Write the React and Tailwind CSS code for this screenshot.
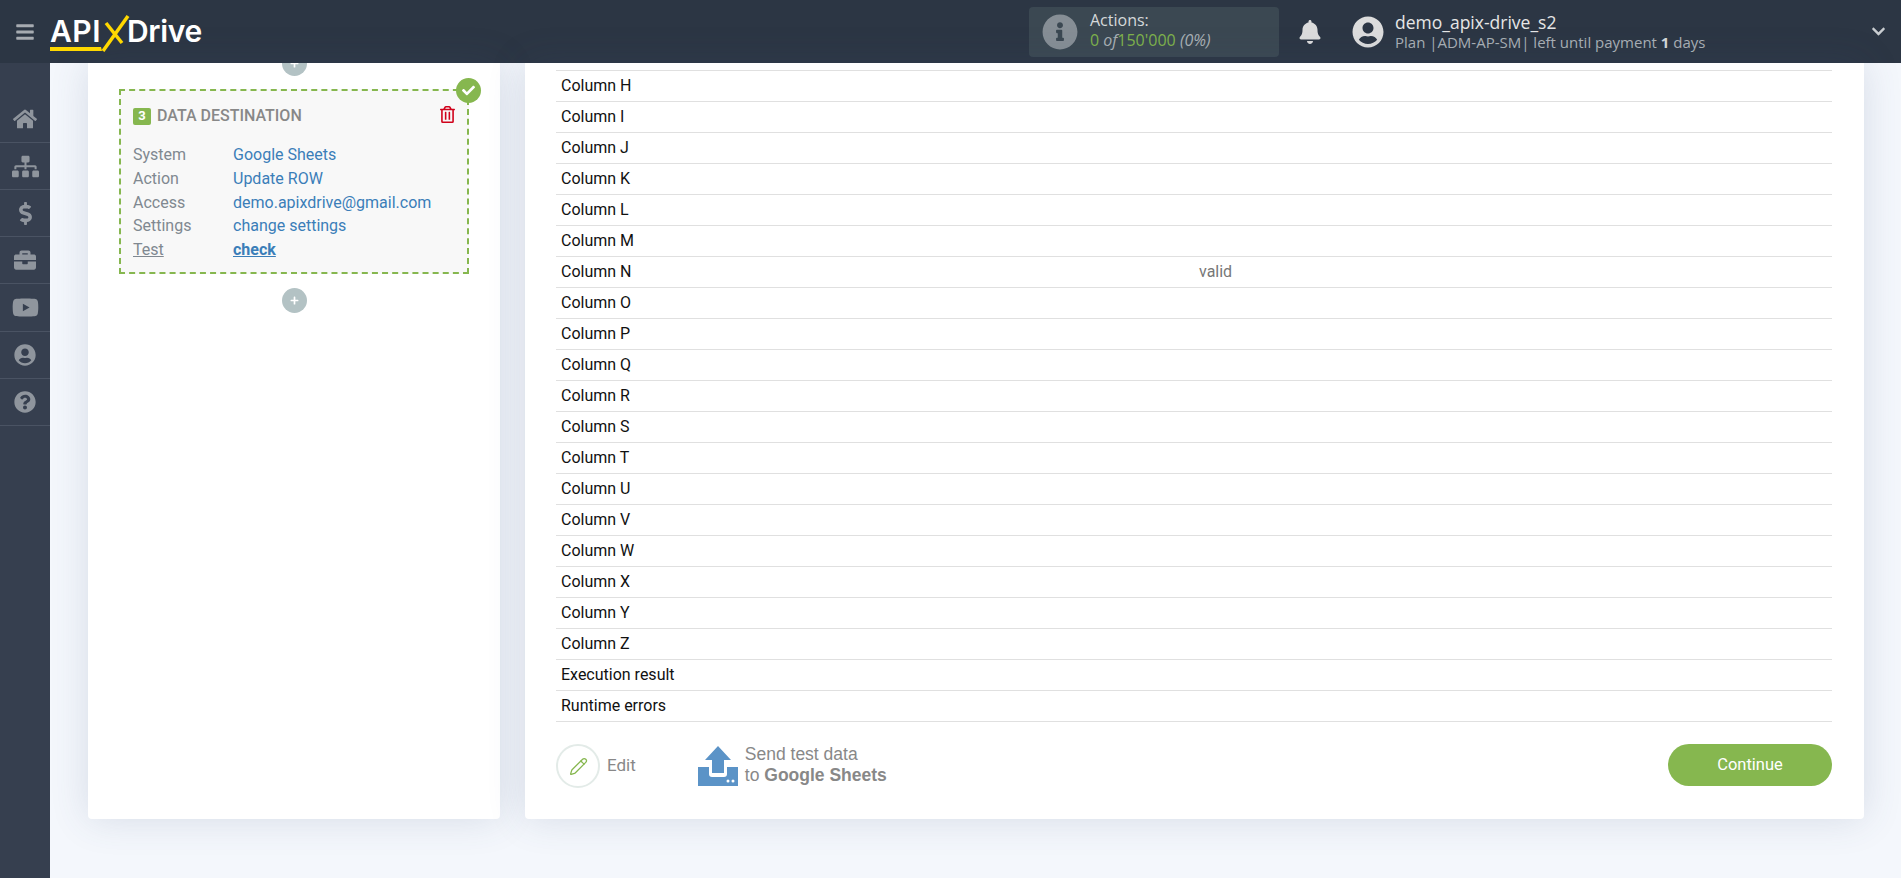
import React from "react";
import {
  FaBars, FaHome, FaSitemap, FaDollarSign, FaBriefcase, FaYoutube, FaUserCircle,
  FaQuestionCircle, FaInfoCircle, FaBell, FaChevronDown, FaCheck, FaRegTrashAlt, FaPlus,
} from "react-icons/fa";
import { Pencil } from "lucide-react";

const roboto = "font-['Roboto',sans-serif]";

const navIcons = [
  [FaHome, "text-[24px]", "h-[47px]"],
  [FaSitemap, "text-[27px]", "h-[47px]"],
  [FaDollarSign, "text-[23px]", "h-[47px]"],
  [FaBriefcase, "text-[22px]", "h-[47px]"],
  [FaYoutube, "text-[27px]", "h-[48px]"],
  [FaUserCircle, "text-[22px]", "h-[47px]"],
  [FaQuestionCircle, "text-[22px]", "h-[47px]"],
];

const details = [
  ["System", "Google Sheets"],
  ["Action", "Update ROW"],
  ["Access", "demo.apixdrive@gmail.com"],
  ["Settings", "change settings"],
];

const columns = "HIJKLMNOPQRSTUVWXYZ".split("").map((c) => "Column " + c);
const rows = [...columns, "Execution result", "Runtime errors"];

const Plus = ({ className = "" }) => (
  <div className={"flex h-[25px] w-[25px] items-center justify-center rounded-full bg-[#b3c2c4] text-[9px] text-white " + className}>
    <FaPlus />
  </div>
);

const Logo = () => (
  <div className="relative ml-[15px] flex h-[36px] w-[152px] items-center font-['Inter',sans-serif] text-[30px] font-semibold text-white">
    <span className="tracking-[0.5px]">API</span>
    <svg className="absolute left-0 top-0" width="90" height="40" viewBox="0 0 90 40">
      <path d="M0 33 H51 L52 37 H0 Z" fill="#ffd800" />
      <path d="M53 37 L78 2" stroke="#ffd800" strokeWidth="3.5" fill="none" />
      <path d="M56 9 L72 29" stroke="#ffd800" strokeWidth="3.5" fill="none" />
    </svg>
    <span className="ml-[26px] tracking-[-0.3px]">Drive</span>
  </div>
);

const Header = () => (
  <header className="flex h-[63px] shrink-0 items-center bg-[#2c3644] font-['Open_Sans',sans-serif]">
    <FaBars className="ml-[15px] text-[20px] text-[#a6abb1]" />
    <Logo />
    <div className="ml-[827px] flex h-[50px] w-[250px] items-center rounded-[4px] bg-[#3b4852] pl-[13px]">
      <FaInfoCircle className="text-[36px] text-[#868e95]" />
      <div className="ml-[12px] mt-[-3px] leading-[20px]">
        <div className="text-[16px] text-[#d5d8da]">Actions:</div>
        <div className="text-[16px] text-[#7fb24b]">
          0 <i className="text-[#a9b0b5]">of</i>150'000 <i className="text-[#a9b0b5]">(0%)</i>
        </div>
      </div>
    </div>
    <FaBell className="ml-[19px] text-[24px] text-[#dcdcdc]" />
    <FaUserCircle className="ml-[30px] text-[32px] text-[#dcdcdc]" />
    <div className="ml-[11px] leading-[20px]">
      <div className="text-[17.5px] text-[#e6e6e6]">demo_apix-drive_s2</div>
      <div className="text-[15px] text-[#a9b0b5]">
        Plan |ADM-AP-SM| left until payment <b className="text-[#d5d8da]">1</b> days
      </div>
    </div>
    <FaChevronDown className="ml-auto mr-[15px] text-[15px] text-[#c9cdd1]" />
  </header>
);

const Sidebar = () => (
  <nav className="w-[50px] shrink-0 bg-[#363f4f] pt-[33px]">
    {navIcons.map(([Icon, size, height], i) => (
      <div key={i} className={"flex items-center justify-center border-b border-[#4a5363] text-[#8f959d] " + height}>
        <Icon className={size} />
      </div>
    ))}
  </nav>
);

const FlowCard = () => (
  <section className="flex h-[756px] w-[412px] shrink-0 flex-col items-center overflow-hidden rounded-b-[4px] bg-white shadow-[0_0_38px_rgba(60,80,120,0.16)]">
    <Plus className="mt-[-12px]" />
    <div className="relative mt-[13px] h-[185px] w-[350px] border-2 border-dashed border-[#86b74f] bg-[#f8f8f8] pl-[12px]">
      <div className="absolute right-[-14px] top-[-13px] flex h-[25px] w-[25px] items-center justify-center rounded-full bg-[#86b74f] text-[13px] text-white">
        <FaCheck />
      </div>
      <FaRegTrashAlt className="absolute right-[11px] top-[15px] text-[17px] text-[#d0021b]" />
      <div className="mt-[13px] flex items-center">
        <span className="flex h-[17px] w-[18px] items-center justify-center rounded-[2px] bg-[#86b74f] text-[13px] font-bold text-white">3</span>
        <span className="ml-[6px] text-[16px] font-medium text-[#888]">DATA DESTINATION</span>
      </div>
      <div className="mt-[15px] text-[16px] leading-[23.8px]">
        {details.map(([k, v]) => (
          <div key={k} className="flex">
            <span className="w-[100px] text-[#808890]">{k}</span>
            <span className="text-[#3b7eb8]">{v}</span>
          </div>
        ))}
        <div className="flex">
          <span className="w-[100px] text-[#808890] underline">Test</span>
          <span className="font-bold text-[#3b7eb8] underline">check</span>
        </div>
      </div>
    </div>
    <Plus className="mt-[14px]" />
  </section>
);

const ResultPanel = () => (
  <section className="flex h-[756px] flex-1 flex-col rounded-b-[4px] bg-white pl-[31px] pr-[32px] pt-[7px] shadow-[0_0_38px_rgba(60,80,120,0.16)]">
    <div className="border-t border-[#e0e0e0] text-[16px] text-[#111]">
      {rows.map((r) => (
        <div key={r} className="flex h-[31px] items-center border-b border-[#e0e0e0] pl-[5px] pb-[1px]">
          <span className="w-[638px]">{r}</span>
          {r === "Column N" && <span className="text-[#777]">valid</span>}
        </div>
      ))}
    </div>
    <div className="mt-[22px] flex items-center">
      <div className="flex h-[44px] w-[44px] items-center justify-center rounded-full border-2 border-[#e3ebe8] text-[#86b74f]">
        <Pencil size={19} strokeWidth={1.6} />
      </div>
      <span className="ml-[7px] text-[17px] text-[#888]">Edit</span>
      <svg className="ml-[61px]" width="42" height="42" viewBox="0 0 42 42">
        <path d="M21 1 L34 15 H27 V28 H15 V15 H8 Z" fill="#5b93c7" />
        <path d="M1 22 H12 V29 a3 3 0 0 0 3 3 H27 a3 3 0 0 0 3 -3 V22 H41 V41 H1 Z" fill="#5b93c7" />
        <circle cx="31" cy="36" r="1.5" fill="#fff" />
        <circle cx="36" cy="36" r="1.5" fill="#fff" />
      </svg>
      <div className="ml-[6px] mt-[-2px] font-['Liberation_Sans',sans-serif] text-[17.5px] leading-[21px] text-[#888]">
        <div>Send test data</div>
        <div>to <b>Google Sheets</b></div>
      </div>
      <button className="mb-[2px] ml-auto h-[42px] w-[164px] rounded-full bg-[#86b74f] text-[16.5px] text-white">Continue</button>
    </div>
  </section>
);

export default function App() {
  return (
    <div className={"flex h-[878px] flex-col overflow-hidden bg-[#f4f7fc] " + roboto}>
      <Header />
      <div className="flex min-h-0 flex-1">
        <Sidebar />
        <main className="flex flex-1 items-start gap-[25px] pl-[38px] pr-[37px]">
          <FlowCard />
          <ResultPanel />
        </main>
      </div>
    </div>
  );
}
